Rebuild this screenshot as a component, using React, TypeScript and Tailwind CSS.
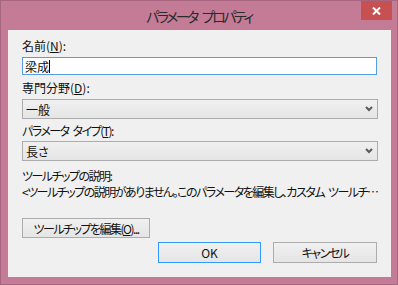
import React from 'react';

const jp = "font-['Noto_Sans_CJK_JP','Noto_Sans',sans-serif] [font-feature-settings:'palt']";

function Gap({ w = 'w-[4px]' }: { w?: string }) {
  return <span className={`inline-block ${w}`} />;
}

function Chevron() {
  return (
    <svg width="8" height="6" viewBox="0 0 8 6" className="shrink-0">
      <path d="M1 1 L4 4 L7 1" fill="none" stroke="#5a5a5a" strokeWidth="2" />
    </svg>
  );
}

function Select({ value }: { value: string }) {
  return (
    <div className="flex items-center justify-between h-[20px] w-[356px] border border-[#acacac] bg-gradient-to-b from-[#f0f0f0] to-[#e5e5e5] pl-[3px] pr-[4px]">
      <span className="text-[12px] leading-[15px] text-[#111]">{value}</span>
      <Chevron />
    </div>
  );
}

function Label({ children, className = '' }: { children: React.ReactNode; className?: string }) {
  return <div className={`text-[12px] leading-[15px] text-[#111] whitespace-nowrap ${className}`}>{children}</div>;
}

export default function App() {
  return (
    <div className={`w-[398px] h-[285px] bg-[#c47b96] border border-[#a86580] flex flex-col ${jp}`}>
      {/* title bar */}
      <div className="grid grid-cols-[1fr_auto_1fr] h-[29px]">
        <div />
        <div className="text-[14px] leading-[20px] pt-[5px] tracking-[-2.5px] text-[#2a2a2a] whitespace-nowrap">
          パラメータ<Gap w="w-[5px]" />プロパティ
        </div>
        <div className="flex justify-end pr-[5px]">
          <div className="w-[31px] h-[19px] bg-[#c75050] flex items-center justify-center">
            <svg width="9" height="8" viewBox="0 0 9 8">
              <path d="M1 0.5 L8 7.5 M8 0.5 L1 7.5" stroke="#fff" strokeWidth="2" />
            </svg>
          </div>
        </div>
      </div>

      {/* client area */}
      <div className="ml-[7px] w-[383px] h-[247px] bg-[#f0f0f0] px-[14px] pt-[8px]">
        <Label>名前(<u>N</u>):</Label>
        <div className="mt-[4px] h-[18px] w-[355px] border border-[#569de5] bg-white pl-[2px] flex items-center">
          <span className="text-[12px] leading-[15px] text-[#111]">梁成</span>
          <span className="w-px h-[13px] bg-black" />
        </div>

        <Label className="mt-[5px]">専門分野(<u>D</u>):</Label>
        <div className="mt-[4px]">
          <Select value="一般" />
        </div>

        <Label className="mt-[4px] tracking-[-1.5px]">
          パラメータ<Gap />タイプ(<u>T</u>):
        </Label>
        <div className="mt-[3px]">
          <Select value="長さ" />
        </div>

        <Label className="mt-[7px] tracking-[-1.5px]">ツールチップの説明:</Label>
        <Label className="mt-[1px] w-[358px] overflow-hidden tracking-[-1.5px]">
          &lt;ツールチップの説明がありません。このパラメータを編集し、カスタム<Gap />ツールチ…
        </Label>

        <div className="mt-[19px] flex">
          <button className="h-[20px] w-[128px] border border-[#acacac] bg-gradient-to-b from-[#f0f0f0] to-[#e5e5e5] text-[12px] leading-[15px] text-[#111] whitespace-nowrap tracking-[-1.5px]">
            ツールチップを編集(<u>O</u>)...
          </button>
        </div>

        <div className="mt-[4px] flex justify-end gap-[12px]">
          <button className="h-[21px] w-[103px] border border-[#3399ff] bg-gradient-to-b from-[#f0f0f0] to-[#e5e5e5] text-[12px] leading-[15px] text-[#111]">
            OK
          </button>
          <button className="h-[21px] w-[104px] border border-[#acacac] bg-gradient-to-b from-[#f0f0f0] to-[#e5e5e5] text-[12px] leading-[15px] text-[#111] tracking-[-1.5px]">
            キャンセル
          </button>
        </div>
      </div>
    </div>
  );
}
